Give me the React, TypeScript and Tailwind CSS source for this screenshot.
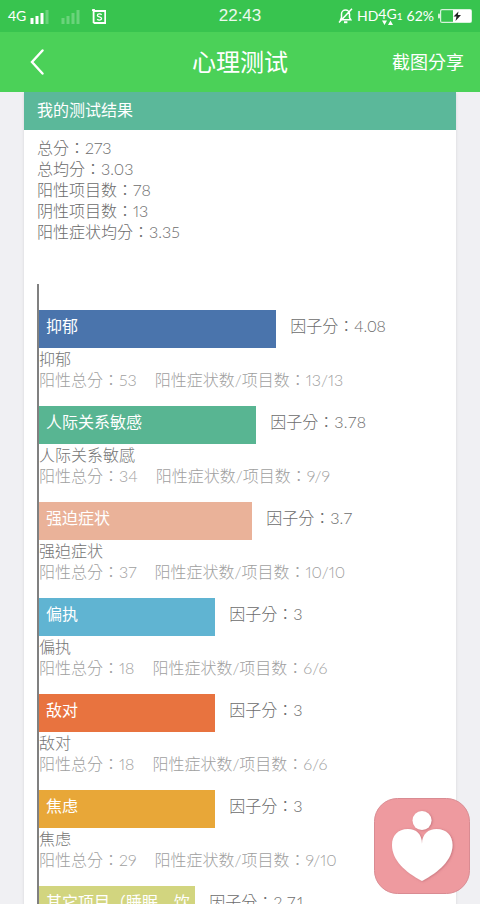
import { clsx } from 'clsx';

type Factor = {
  name: string;
  score: string;
  total: number;
  positive: string;
  width: number;
  color: string;
};

const summary = [
  { label: '总分', value: '273' },
  { label: '总均分', value: '3.03' },
  { label: '阳性项目数', value: '78' },
  { label: '阴性项目数', value: '13' },
  { label: '阳性症状均分', value: '3.35' },
];

// width is the share of the chart area, in percent
const factors: Factor[] = [
  { name: '抑郁', score: '4.08', total: 53, positive: '13/13', width: 58.7, color: 'bg-[#4a74ac]' },
  { name: '人际关系敏感', score: '3.78', total: 34, positive: '9/9', width: 53.8, color: 'bg-[#58b592]' },
  { name: '强迫症状', score: '3.7', total: 37, positive: '10/10', width: 52.8, color: 'bg-[#eab299]' },
  { name: '偏执', score: '3', total: 18, positive: '6/6', width: 43.6, color: 'bg-[#60b4d2]' },
  { name: '敌对', score: '3', total: 18, positive: '6/6', width: 43.6, color: 'bg-[#e8733f]' },
  { name: '焦虑', score: '3', total: 29, positive: '9/10', width: 43.6, color: 'bg-[#e8a738]' },
  { name: '其它项目（睡眠、饮食）', score: '2.71', total: 19, positive: '6/7', width: 38.7, color: 'bg-[#d2d57f]' },
];

function Signal({ level }: { level: number }) {
  return (
    <svg width="19" height="15" viewBox="0 0 19 15" fill="#fff" aria-hidden="true">
      {[6, 8, 11, 14].map((h, i) => (
        <rect key={h} x={i * 5 + 0.5} y={15 - h} width="3" height={h} opacity={i < level ? 1 : 0.25} />
      ))}
    </svg>
  );
}

function StatusBar() {
  return (
    <div className="grid h-8 shrink-0 grid-cols-[1fr_auto_1fr] items-center bg-[#38c44f] px-2 text-white">
      <div className="flex items-center">
        <span className="text-sm">4G</span>
        <span className="ml-1"><Signal level={3} /></span>
        <span className="ml-3"><Signal level={0} /></span>
        <svg className="ml-3" width="14" height="15" viewBox="0 0 14 15" fill="none" stroke="#fff" aria-hidden="true">
          <path d="M0 1.2h3M1.6 0v14M1.6 2h11.6v12H1.6" strokeWidth="1.8" />
          <path d="M9.6 5.8C8.8 4.6 5.4 4.6 5.4 6.4c0 2 4.2 1 4.2 3.2 0 1.9-3.4 1.9-4.4.5" strokeWidth="1.3" />
        </svg>
      </div>
      <span className="font-['Liberation_Sans'] text-[17px] text-white/90">22:43</span>
      <div className="flex items-center justify-end">
        <svg width="15" height="16" viewBox="0 0 15 16" fill="none" stroke="#fff" strokeWidth="1.5" aria-hidden="true">
          <path d="M2.6 11.8h10.2l-1.3-2.2V6a4 4 0 0 0-8 0v3.6zM14 .8 1 14.6" />
          <path d="M6 14.2h3.4" strokeWidth="2" />
        </svg>
        <span className="ml-1 text-sm">HD</span>
        <div className="flex flex-col items-center">
          <span className="text-sm leading-3">4G</span>
          <svg width="13" height="5" viewBox="0 0 13 5" fill="#fff" aria-hidden="true">
            <path d="M1 .4h5L3.5 5zM7 5h5L9.5.4z" />
          </svg>
        </div>
        <span className="text-[10px]">1</span>
        <span className="ml-1 text-sm">62%</span>
        <svg className="ml-1" width="34" height="14" viewBox="0 0 34 14" aria-hidden="true">
          <rect x="2.6" y=".6" width="30.8" height="12.8" rx="1.5" fill="none" stroke="#fff" strokeOpacity=".8" strokeWidth="1.2" />
          <rect x="0" y="4.5" width="2" height="5" rx="1" fill="#fff" opacity=".8" />
          <rect x="15" y="1" width="18" height="12" fill="#fff" />
          <path d="m20.5 2.5-5 5h3l-1 4.500 5.500-6h-3.200z" fill="#222" />
        </svg>
      </div>
    </div>
  );
}

function FactorRow({ factor }: { factor: Factor }) {
  return (
    <li className="leading-[21px]">
      <div className="flex h-[38px]">
        <div
          className={clsx(
            "shrink-0 overflow-hidden pt-[5px] pr-1 pl-[7px] font-[Lato,'Noto_Sans_CJK_SC',sans-serif] font-normal text-white",
            factor.color
          )}
          style={{ width: `${factor.width}%` }}
        >
          {factor.name}
        </div>
        <div className="ml-[14px] pt-[5px] text-[#6c6c6c]">因子分：{factor.score}</div>
      </div>
      <div className="text-[#757575]">{factor.name}</div>
      <div className="flex gap-[18px] text-[#a0a0a0] proportional-nums">
        <span>阳性总分：{factor.total}</span>
        <span>阳性症状数/项目数：{factor.positive}</span>
      </div>
    </li>
  );
}

export default function App() {
  return (
    <div className="relative flex h-screen flex-col overflow-hidden bg-[#f0f0f3] font-[Lato,'Noto_Sans_CJK_TC',sans-serif]">
      <StatusBar />
      <header className="grid h-[60px] shrink-0 grid-cols-[1fr_auto_1fr] items-center bg-[#4bd158] px-4 text-white">
        <button type="button" aria-label="返回" className="justify-self-start pl-[14px]">
          <svg width="14" height="26" viewBox="0 0 14 26" fill="none" stroke="#fff" strokeWidth="2.4" strokeLinecap="round">
            <path d="M12.5 1.5 2 13l10.500 11.500" />
          </svg>
        </button>
        <h1 className="text-2xl">心理测试</h1>
        <button type="button" className="justify-self-end text-lg">截图分享</button>
      </header>

      <main className="min-h-0 flex-1 overflow-y-auto px-6 [scrollbar-width:none]">
        <section className="bg-white shadow-sm">
          <h2 className="h-[38px] bg-[#5bb89a] px-[13px] leading-9 text-white">我的测试结果</h2>
          <dl className="px-[13px] pt-[7px] leading-[21px] font-light text-[#6c6c6c] proportional-nums">
            {summary.map((item) => (
              <div key={item.label} className="flex">
                <dt>{item.label}：</dt>
                <dd>{item.value}</dd>
              </div>
            ))}
          </dl>
          <div className="mt-[42px] px-[13px] pb-6">
            <ul className="flex flex-col gap-4 border-l-2 border-[#808080] pt-[26px] font-light">
              {factors.map((factor) => (
                <FactorRow key={factor.name} factor={factor} />
              ))}
            </ul>
          </div>
        </section>
      </main>

      <button type="button" aria-label="心理测试" className="absolute right-[10px] bottom-[10px]">
        <svg width="96" height="96" viewBox="0 0 96 96">
          <defs>
            <filter id="shade" x="-20%" y="-20%" width="140%" height="140%">
              <feDropShadow dx="1" dy="0.5" stdDeviation="1" floodColor="#a0505c" floodOpacity=".5" />
            </filter>
          </defs>
          <rect x=".5" y=".5" width="95" height="95" rx="23" fill="#ee9a9f" stroke="#d98b92" />
          <g fill="#fff" filter="url(#shade)">
            <circle cx="48" cy="22.5" r="9.5" />
            <path d="M48 46C48 36 42 31 34 31c-10 0-16 6.500-16 16 0 15 13 27 30 36 17-9 30.500-21 30.500-36 0-9.500-6-16-16-16-8 0-14.500 5-14.500 15z" />
          </g>
        </svg>
      </button>
    </div>
  );
}
